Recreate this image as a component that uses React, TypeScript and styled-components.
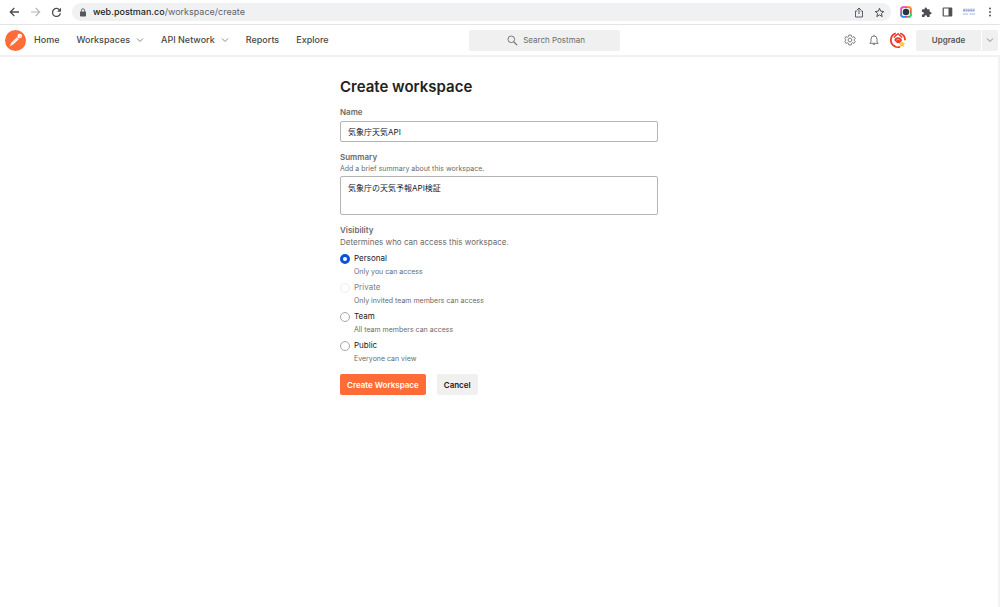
import React from 'react';
import styled, { createGlobalStyle } from 'styled-components';

const GlobalStyle = createGlobalStyle`
  * { box-sizing: border-box; }
  html, body { margin: 0; background: #fff; }
  body, button, input, textarea {
    font-family: Inter, "Noto Sans CJK JP", "Liberation Sans", sans-serif;
  }
  button { border: 0; padding: 0; cursor: pointer; background: none; }
  svg { display: block; flex: none; }
`;

const Page = styled.div`
  display: flex;
  flex-direction: column;
  min-height: 100vh;
`;

const BrowserBar = styled.div`
  display: flex;
  align-items: center;
  height: 25px;
  padding-left: 4px;
  border-bottom: 1px solid #e3e4e6;
`;

const BrowserButton = styled.button<{ $faded?: boolean }>`
  display: flex;
  align-items: center;
  justify-content: center;
  width: 21px;
  height: 20px;
  flex: none;
  color: ${(p) => (p.$faded ? '#b4b6b9' : '#4c4f53')};
`;

const AddressBar = styled.div`
  display: flex;
  align-items: center;
  flex: 1;
  height: 18px;
  margin: 0 4px 0 5px;
  padding: 0 1px 0 7px;
  border-radius: 9px;
  background: #f0f1f2;
  color: #55585c;
`;

const AddressText = styled.div`
  flex: 1;
  margin-left: 6px;
  font-size: 9px;
  line-height: 18px;
  color: #5f6368;
`;

const Host = styled.span`
  color: #202124;
  font-weight: 500;
`;

const Header = styled.header`
  display: flex;
  align-items: center;
  height: 32px;
  padding: 0 2px 0 5px;
  border-bottom: 2px solid #f2f2f2;
`;

const Nav = styled.nav`
  display: flex;
  align-items: center;
  gap: 17px;
  margin-left: 8px;
`;

const NavLink = styled.a`
  display: flex;
  align-items: center;
  gap: 6px;
  font-size: 9px;
  line-height: 16px;
  font-weight: 500;
  color: #484848;
  text-decoration: none;
  white-space: nowrap;
`;

const SearchButton = styled.button`
  display: flex;
  align-items: center;
  justify-content: center;
  gap: 5px;
  width: 151px;
  height: 21px;
  margin-left: 140px;
  padding-left: 4px;
  border-radius: 2px;
  background: #f0f0f0;
  color: #6b6b6b;
  font-size: 8px;
`;

const Actions = styled.div`
  display: flex;
  align-items: center;
  margin-left: auto;
`;

const IconButton = styled.button`
  display: flex;
  justify-content: center;
  width: 24px;
  color: #6b6b6b;
`;

const UpgradeGroup = styled.div`
  display: flex;
  gap: 1px;
  margin-left: 6px;
`;

const UpgradeButton = styled.button<{ $narrow?: boolean }>`
  display: flex;
  align-items: center;
  justify-content: center;
  width: ${(p) => (p.$narrow ? 16 : 65)}px;
  height: 21px;
  border-radius: ${(p) => (p.$narrow ? '0 2px 2px 0' : '2px 0 0 2px')};
  background: #f0f0f0;
  color: #555;
  font-size: 8px;
  font-weight: 600;
`;

const Main = styled.main`
  flex: 1;
  border-right: 2px solid #f2f2f2;
  padding: 18px 12px 24px;
`;

const Form = styled.form`
  width: 100%;
  max-width: 318px;
  margin: 0 auto;
`;

const Title = styled.h1`
  margin: 0 0 8px;
  font-size: 15px;
  line-height: 24px;
  font-weight: 600;
  color: #212121;
`;

const Label = styled.label`
  display: block;
  font-size: 8px;
  line-height: 11px;
  font-weight: 600;
  color: #6b6b6b;
`;

const Hint = styled.p<{ $large?: boolean }>`
  margin: 0;
  font-size: ${(p) => (p.$large ? 8 : 7)}px;
  line-height: 12px;
  color: #6b6b6b;
`;

const TextInput = styled.input`
  display: block;
  width: 100%;
  height: 21px;
  margin: 3px 0 10px;
  padding: 0 7px;
  border: 1px solid #b4b4b4;
  border-radius: 2px;
  color: #212121;
  font-size: 8px;
  outline: 0;
`;

const TextArea = styled.textarea`
  display: block;
  width: 100%;
  height: 39px;
  margin: 1px 0 9px;
  padding: 5px 7px;
  border: 1px solid #b4b4b4;
  border-radius: 2px;
  color: #212121;
  font-size: 8px;
  line-height: 12px;
  resize: none;
  outline: 0;
`;

const Fieldset = styled.fieldset`
  min-width: 0;
  margin: 0;
  padding: 0;
  border: 0;
`;

const Legend = styled.legend`
  padding: 0;
  font-size: 8px;
  line-height: 12px;
  font-weight: 600;
  color: #6b6b6b;
`;

const Options = styled.div`
  display: grid;
  gap: 3px;
  margin: 4px 0 9px;
`;

const Option = styled.label<{ $disabled?: boolean }>`
  display: grid;
  grid-template-columns: 10px 1fr;
  column-gap: 4px;
  align-items: center;
  color: ${(p) => (p.$disabled ? '#808080' : '#212121')};
  font-size: 8px;
  line-height: 13px;
`;

const Radio = styled.input`
  appearance: none;
  width: 10px;
  height: 10px;
  margin: 0;
  border: 1px solid #a6a6a6;
  border-radius: 50%;
  background: #fff;
  &:checked { border: 3px solid #0a53d8; }
  &:disabled { border-color: #ededed; }
`;

const OptionHint = styled.span`
  grid-column: 2;
  font-size: 7px;
  color: #6b6b6b;
`;

const Buttons = styled.div`
  display: flex;
  gap: 11px;
`;

const FormButton = styled.button<{ $primary?: boolean }>`
  height: 21px;
  padding: 0 7px;
  border-radius: 2px;
  background: ${(p) => (p.$primary ? '#ff6c37' : '#f0f0f0')};
  color: ${(p) => (p.$primary ? '#fff' : '#212121')};
  font-size: 8px;
  font-weight: 600;
`;

const Chevron = () => (
  <svg width="8" height="8" viewBox="0 0 8 8" fill="none" stroke="#7a7a7a" strokeWidth="0.9">
    <path d="M1 2.5 4 5.5 7 2.5" />
  </svg>
);

const BackArrow = () => (
  <svg width="11" height="10" viewBox="0 0 11 10" fill="none" stroke="currentColor" strokeWidth="1.3">
    <path d="M10 5H1.5M5.3 1 1.3 5l4 4" />
  </svg>
);

const ForwardArrow = () => (
  <svg width="11" height="10" viewBox="0 0 11 10" fill="none" stroke="currentColor" strokeWidth="1.1">
    <path d="M1 5h8.5M5.7 1l4 4-4 4" />
  </svg>
);

const Reload = () => (
  <svg width="11" height="11" viewBox="0 0 11 11" fill="none" stroke="currentColor" strokeWidth="1.3">
    <path d="M8.9 3.3A4 4 0 1 0 9.4 6.4" />
    <path d="M10 .8v4H6z" fill="currentColor" stroke="none" />
  </svg>
);

const Lock = () => (
  <svg width="8" height="9" viewBox="0 0 8 9">
    <rect x="1" y="3.6" width="6" height="4.9" rx="0.7" fill="currentColor" />
    <path d="M2.4 4V2.4a1.6 1.6 0 0 1 3.2 0V4" fill="none" stroke="currentColor" strokeWidth="0.9" />
  </svg>
);

const Share = () => (
  <svg width="10" height="11" viewBox="0 0 10 11" fill="none" stroke="currentColor" strokeWidth="0.9">
    <path d="M3.3 4H1.5v6h7V4H6.7M5 7V1.3M3 3l2-2 2 2" />
  </svg>
);

const Star = () => (
  <svg width="11" height="11" viewBox="0 0 11 11" fill="none" stroke="currentColor" strokeWidth="1">
    <path d="m5.5 1.3 1.2 2.9 3.1.3-2.4 2 .8 3.1-2.7-1.7-2.7 1.7.8-3.1-2.4-2 3.1-.3z" />
  </svg>
);

const CameraExtension = () => (
  <svg width="12" height="12" viewBox="0 0 12 12">
    <rect x="0.5" y="0.5" width="11" height="11" rx="2" fill="#f43b50" />
    <path d="M.5 6V2.5a2 2 0 0 1 2-2H6L2.5 6z" fill="#f14bd0" />
    <path d="M6 .5h3.5a2 2 0 0 1 2 2V5z" fill="#ff9700" />
    <path d="M11.5 5v4.5a2 2 0 0 1-2 2H7z" fill="#30c963" />
    <path d="M7 11.5H2.5a2 2 0 0 1-2-2V6z" fill="#258cff" />
    <rect x="2" y="2" width="8" height="8" rx="1.5" fill="#e5f7f8" />
    <circle cx="6" cy="6" r="3.2" fill="#2d3440" />
  </svg>
);

const Puzzle = () => (
  <svg width="11" height="11" viewBox="0 0 24 24" fill="currentColor">
    <path d="M20.5 11H19V7a2 2 0 0 0-2-2h-4V3.5a2.500 2.500 0 0 0-5 0V5H4a2 2 0 0 0-2 2v3.800h1.500a2.700 2.700 0 0 1 0 5.400H2V20a2 2 0 0 0 2 2h3.800v-1.500a2.700 2.700 0 0 1 5.400 0V22H17a2 2 0 0 0 2-2v-4h1.500a2.500 2.500 0 0 0 0-5z" />
  </svg>
);

const SidePanel = () => (
  <svg width="11" height="10" viewBox="0 0 11 10">
    <rect x="1.2" y="1" width="8.5" height="8" rx="0.5" fill="#fff" stroke="currentColor" strokeWidth="1.2" />
    <path d="M6.5 1h3.200v8H6.500z" fill="currentColor" />
  </svg>
);

const ProfileBadge = () => (
  <svg width="14" height="10" viewBox="0 0 14 10" fill="none" stroke="#5a73b8">
    <path d="M1 2h12" strokeWidth="0.8" opacity="0.35" />
    <path d="M1 3.500h12" strokeWidth="2" strokeDasharray="2 .4" opacity="0.65" />
    <path d="M1 7h5M7.500 7h5.500" strokeWidth="0.900" opacity="0.600" />
  </svg>
);

const MenuDots = () => (
  <svg width="4" height="10" viewBox="0 0 4 10" fill="currentColor">
    <circle cx="2" cy="1.5" r="0.95" />
    <circle cx="2" cy="5" r="0.95" />
    <circle cx="2" cy="8.5" r="0.95" />
  </svg>
);

const PostmanLogo = () => (
  <svg width="21" height="21" viewBox="0 0 21 21">
    <circle cx="10.5" cy="10.5" r="10.5" fill="#ff6c37" />
    <path d="m4.500 16.500 2.200-4.200L12.200 7l1.800 1.900-5.300 5z" fill="#fff" />
    <circle cx="14.700" cy="6" r="2.300" fill="#fff" />
    <path d="m12 6.800 2 2.200" stroke="#ff6c37" strokeWidth="0.400" />
    <path d="m7.500 13 5.300-4.900" stroke="#ff9a76" strokeWidth="0.500" />
    <path d="M14.600 5.700a1.300 1.300 0 0 0 1.300.9" fill="none" stroke="#ff6c37" strokeWidth="0.500" />
  </svg>
);

const SearchIcon = () => (
  <svg width="11" height="11" viewBox="0 0 11 11" fill="none" stroke="currentColor">
    <circle cx="4.3" cy="4.3" r="3.3" strokeWidth="0.9" />
    <path d="m6.800 6.800 3.300 3.300" strokeWidth="1.200" />
  </svg>
);

const Gear = () => (
  <svg width="12" height="12" viewBox="0 0 24 24" fill="none" stroke="currentColor" strokeWidth="1.7" strokeLinejoin="round">
    <path d="M9.700 2h4.600l.7 3 2.200 1.300 3-1 2.300 4-2.300 2v1.400l2.300 2-2.300 4-3-1L15 19l-.7 3H9.700L9 19l-2.200-1.300-3 1-2.300-4 2.300-2v-1.400l-2.300-2 2.300-4 3 1L9 5z" />
    <circle cx="12" cy="12" r="3.8" />
  </svg>
);

const Bell = () => (
  <svg width="12" height="12" viewBox="0 0 12 12" fill="none" stroke="currentColor" strokeWidth="0.9">
    <path d="M1.800 9.300h8.400L9 7.800V5a3 3 0 0 0-6 0v2.800zM6 2V.7M4.900 9.500a1.100 1.100 0 0 0 2.200 0" />
  </svg>
);

const Avatar = () => (
  <svg width="16" height="16" viewBox="0 0 16 16" fill="none">
    <path d="M5.800 1.300A7 7 0 0 0 5.300 14.500M10.200 1.300A7 7 0 0 1 15 8.300" stroke="#ee3b28" strokeWidth="1.800" />
    <path d="M3.800 5.500 8 1.700l4.200 3.800" stroke="#ee3b28" strokeWidth="1.500" />
    <path d="M4.300 8.300C4.500 6.200 6 5.300 8 5.300c2.200 0 3.900 1.300 3.900 3.100L10 11H7z" fill="#ee3b28" />
    <path d="M6.300 8.300c1-1.200 2.600-1.200 3.500 0" stroke="#fff" strokeWidth="0.600" />
    <path d="M4 13.800c2 1.500 4.300 1.700 6 1" stroke="#ee3b28" strokeWidth="1.500" />
    <path d="m12 8.800 1 2 2.300.3-1.600 1.600.3 2.300-2-1-2 1 .3-2.300-1.600-1.600 2.300-.3z" fill="#ffc933" />
  </svg>
);

const navItems = [
  { label: 'Home' },
  { label: 'Workspaces', menu: true },
  { label: 'API Network', menu: true },
  { label: 'Reports' },
  { label: 'Explore' },
];

const visibilityOptions = [
  { value: 'personal', label: 'Personal', hint: 'Only you can access' },
  { value: 'private', label: 'Private', hint: 'Only invited team members can access', disabled: true },
  { value: 'team', label: 'Team', hint: 'All team members can access' },
  { value: 'public', label: 'Public', hint: 'Everyone can view' },
];

export default function App() {
  return (
    <Page>
      <GlobalStyle />
      <BrowserBar>
        <BrowserButton aria-label="Back"><BackArrow /></BrowserButton>
        <BrowserButton aria-label="Forward" $faded><ForwardArrow /></BrowserButton>
        <BrowserButton aria-label="Reload"><Reload /></BrowserButton>
        <AddressBar>
          <Lock />
          <AddressText><Host>web.postman.co</Host>/workspace/create</AddressText>
          <BrowserButton aria-label="Share"><Share /></BrowserButton>
          <BrowserButton aria-label="Bookmark"><Star /></BrowserButton>
        </AddressBar>
        <BrowserButton aria-label="Camera extension"><CameraExtension /></BrowserButton>
        <BrowserButton aria-label="Extensions"><Puzzle /></BrowserButton>
        <BrowserButton aria-label="Side panel"><SidePanel /></BrowserButton>
        <BrowserButton aria-label="Profile"><ProfileBadge /></BrowserButton>
        <BrowserButton aria-label="Menu"><MenuDots /></BrowserButton>
      </BrowserBar>
      <Header>
        <PostmanLogo />
        <Nav>
          {navItems.map((item) => (
            <NavLink key={item.label} href="#">
              {item.label}
              {item.menu && <Chevron />}
            </NavLink>
          ))}
        </Nav>
        <SearchButton><SearchIcon />Search Postman</SearchButton>
        <Actions>
          <IconButton aria-label="Settings"><Gear /></IconButton>
          <IconButton aria-label="Notifications"><Bell /></IconButton>
          <IconButton aria-label="Account"><Avatar /></IconButton>
          <UpgradeGroup>
            <UpgradeButton>Upgrade</UpgradeButton>
            <UpgradeButton $narrow aria-label="Upgrade options"><Chevron /></UpgradeButton>
          </UpgradeGroup>
        </Actions>
      </Header>
      <Main>
        <Form onSubmit={(e) => e.preventDefault()}>
          <Title>Create workspace</Title>
          <Label htmlFor="name">Name</Label>
          <TextInput id="name" defaultValue="気象庁天気API" />
          <Label htmlFor="summary">Summary</Label>
          <Hint>Add a brief summary about this workspace.</Hint>
          <TextArea id="summary" defaultValue="気象庁の天気予報API検証" />
          <Fieldset>
            <Legend>Visibility</Legend>
            <Hint $large>Determines who can access this workspace.</Hint>
            <Options>
              {visibilityOptions.map((o) => (
                <Option key={o.value} $disabled={o.disabled}>
                  <Radio
                    type="radio"
                    name="visibility"
                    value={o.value}
                    defaultChecked={o.value === 'personal'}
                    disabled={o.disabled}
                  />
                  {o.label}
                  <OptionHint>{o.hint}</OptionHint>
                </Option>
              ))}
            </Options>
          </Fieldset>
          <Buttons>
            <FormButton $primary type="submit">Create Workspace</FormButton>
            <FormButton type="button">Cancel</FormButton>
          </Buttons>
        </Form>
      </Main>
    </Page>
  );
}
